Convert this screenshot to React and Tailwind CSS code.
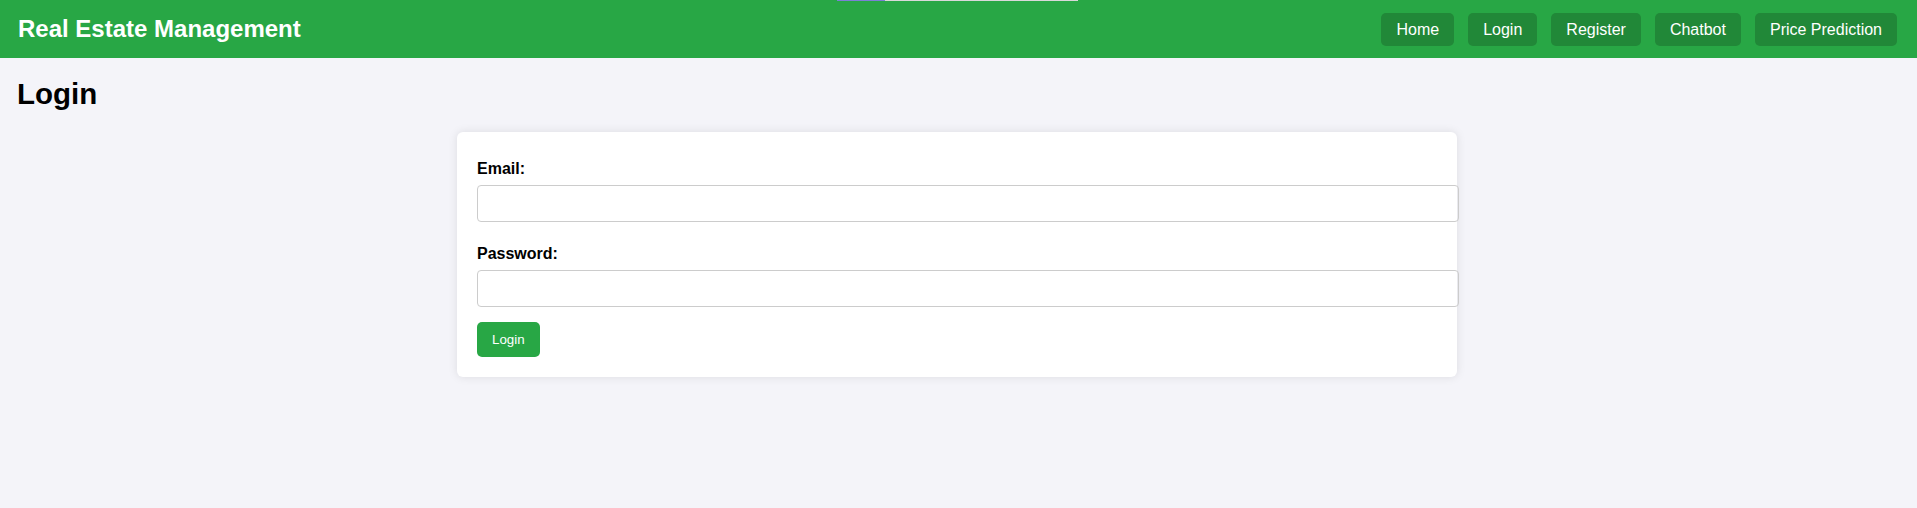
export default function App() {
  const links = ["Home", "Login", "Register", "Chatbot", "Price Prediction"];

  return (
    <div className="relative min-h-screen bg-[#f4f4f9] font-['Liberation_Sans',Arial,sans-serif] text-black">
      {/* loading strip at top */}
      <div className="absolute top-0 left-[837px] flex h-px w-[241px] bg-[#d9d9d9]">
        <div className="h-px w-[48px] bg-[#7b80d6]" />
      </div>

      <header className="flex h-[58px] items-center justify-between bg-[#28a745] pl-[18px] pr-5">
        <h1 className="text-[24px] leading-[28px] font-bold text-white">Real Estate Management</h1>
        <nav className="flex gap-[14px]">
          {links.map((l) => (
            <a
              key={l}
              href="#"
              className="rounded-[5px] bg-[#218838] px-[15px] py-[7px] text-[16px] leading-[19px] text-white"
            >
              {l}
            </a>
          ))}
        </nav>
      </header>

      <main className="pl-[17px] pr-[20px]">
        <h2 className="mt-[19px] mb-[22px] text-[29.5px] leading-[33px] font-bold">Login</h2>

        <div className="mx-auto w-[1000px] rounded-[6px] bg-white px-5 pt-[28px] pb-5 shadow-[0_0_10px_rgba(0,0,0,0.1)]">
          <form className="flex flex-col">
            <label className="text-[16px] leading-[18px] font-bold">Email:</label>
            <input
              type="email"
              className="mt-[7px] box-content h-[15px] w-full rounded-[4px] border border-[#cccccc] p-[10px] text-[13px] outline-none"
            />
            <label className="mt-[23px] text-[16px] leading-[18px] font-bold">Password:</label>
            <input
              type="password"
              className="mt-[7px] box-content h-[15px] w-full rounded-[4px] border border-[#cccccc] p-[10px] text-[13px] outline-none"
            />
            <div className="mt-[15px]">
              <button
                type="button"
                className="h-[35px] rounded-[5px] bg-[#28a745] px-[15px] text-[13.33px] leading-[15px] text-white"
              >
                Login
              </button>
            </div>
          </form>
        </div>
      </main>
    </div>
  );
}
